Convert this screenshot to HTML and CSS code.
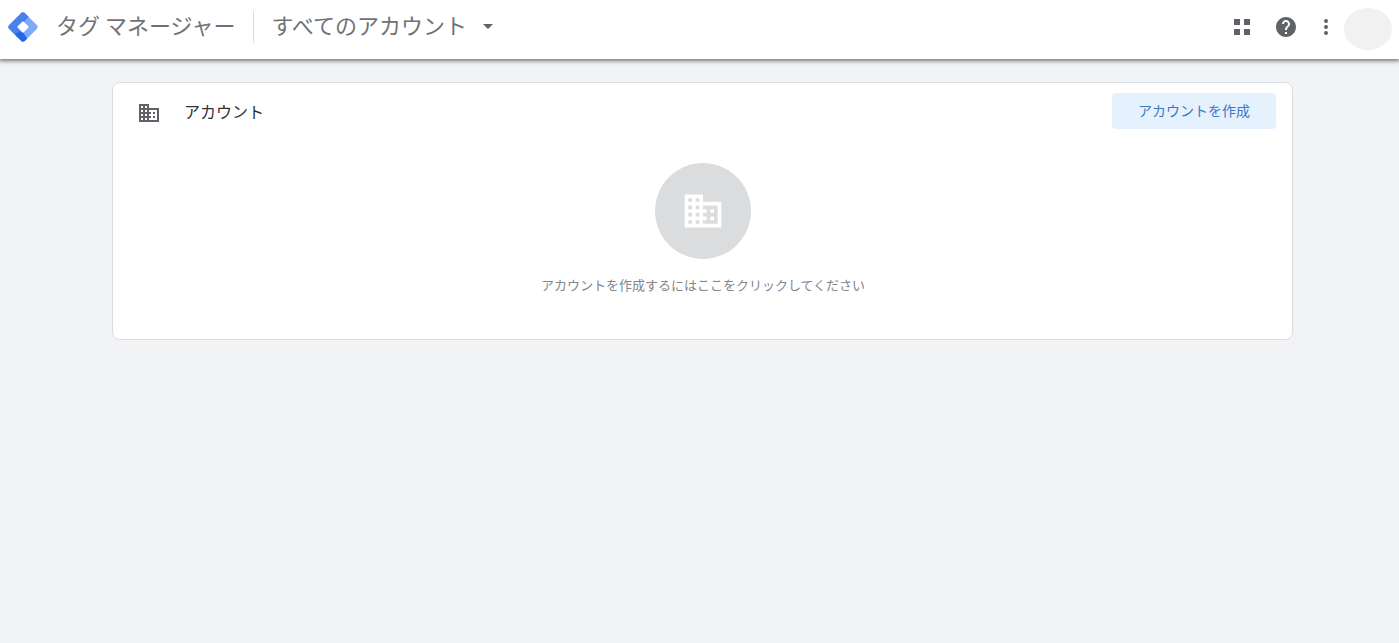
FILE: index.html
```html
<!DOCTYPE html>
<html lang="ja">
<head>
<meta charset="utf-8">
<meta name="viewport" content="width=device-width, initial-scale=1">
<title>タグ マネージャー</title>
<link rel="stylesheet" href="styles.css">
</head>
<body>
<header class="topbar">
  <svg class="logo" viewBox="0 0 30 30" aria-hidden="true">
    <path fill="#80aaf9" d="M13 1.200a3 3 0 0 1 4 0L28.800 13a3 3 0 0 1 0 4L17 28.800a3 3 0 0 1-4 0L1.200 17a3 3 0 0 1 0-4z"/>
    <path fill="#4a80ee" d="M13 1.200a3 3 0 0 1 4 0L20.800 5 10.500 15l5 5-5.500 5.800L1.200 17a3 3 0 0 1 0-4z"/>
    <path fill="#2467e4" d="M11 19.500 15 20.200l4.200 6.400-2.200 2.200a3 3 0 0 1-4 0L7 22.800z"/>
    <path fill="#fff" d="M14.300 9.700a1 1 0 0 1 1.400 0l4.600 4.600a1 1 0 0 1 0 1.400l-4.600 4.600a1 1 0 0 1-1.400 0l-4.600-4.600a1 1 0 0 1 0-1.400z"/>
  </svg>
  <h1 class="product">タグ マネージャー</h1>
  <button class="account-menu" type="button" aria-haspopup="true">
    <span class="account-name">すべてのアカウント</span>
    <svg class="caret" viewBox="0 0 10 5" aria-hidden="true"><path d="M0 0h10L5 5z"/></svg>
  </button>
  <div class="actions">
    <button class="icon-button" type="button" aria-label="アプリ">
      <svg viewBox="0 0 24 24" aria-hidden="true"><path d="M4 4h6v6H4zM14 4h6v6h-6zM4 14h6v6H4zM14 14h6v6h-6z"/></svg>
    </button>
    <button class="icon-button" type="button" aria-label="ヘルプ">
      <svg viewBox="0 0 24 24" aria-hidden="true"><path d="M12 2C6.480 2 2 6.480 2 12s4.480 10 10 10 10-4.480 10-10S17.520 2 12 2zm1 17h-2v-2h2v2zm2.070-7.750-.9.920C13.450 12.900 13 13.500 13 15h-2v-.5c0-1.100.45-2.100 1.170-2.830l1.240-1.260c.37-.36.59-.86.59-1.410 0-1.100-.9-2-2-2s-2 .9-2 2H8c0-2.210 1.790-4 4-4s4 1.790 4 4c0 .88-.36 1.680-.93 2.250z"/></svg>
    </button>
    <button class="icon-button more" type="button" aria-label="その他">
      <svg viewBox="0 0 24 24" aria-hidden="true"><circle cx="12" cy="6" r="2"/><circle cx="12" cy="12" r="2"/><circle cx="12" cy="18" r="2"/></svg>
    </button>
    <button class="avatar" type="button" aria-label="プロフィール"></button>
  </div>
</header>
<main class="page">
  <section class="card">
    <div class="card-header">
      <svg class="card-icon" viewBox="0 0 24 24" aria-hidden="true"><path d="M12 7V3H2v18h20V7H12zM6 19H4v-2h2v2zm0-4H4v-2h2v2zm0-4H4V9h2v2zm0-4H4V5h2v2zm4 12H8v-2h2v2zm0-4H8v-2h2v2zm0-4H8V9h2v2zm0-4H8V5h2v2zm10 12h-8v-2h2v-2h-2v-2h2v-2h-2V9h8v10zm-2-8h-2v2h2v-2zm0 4h-2v2h2v-2z"/></svg>
      <h2 class="card-title">アカウント</h2>
      <button class="create" type="button">アカウントを作成</button>
    </div>
    <button class="empty" type="button">
      <span class="empty-badge">
        <svg viewBox="0 0 24 24" aria-hidden="true"><path d="M12 7V3H2v18h20V7H12zM6 19H4v-2h2v2zm0-4H4v-2h2v2zm0-4H4V9h2v2zm0-4H4V5h2v2zm4 12H8v-2h2v2zm0-4H8v-2h2v2zm0-4H8V9h2v2zm0-4H8V5h2v2zm10 12h-8v-2h2v-2h-2v-2h2v-2h-2V9h8v10zm-2-8h-2v2h2v-2zm0 4h-2v2h2v-2z"/></svg>
      </span>
      <span class="empty-text">アカウントを作成するにはここをクリックしてください</span>
    </button>
  </section>
</main>
</body>
</html>
```
FILE: styles.css
```css
* {
  box-sizing: border-box;
}

body {
  margin: 0;
  min-height: 100vh;
  background: #f1f3f4;
  color: #3c4043;
  font-family: "Noto Sans CJK JP", sans-serif;
}

button {
  border: 0;
  padding: 0;
  background: none;
  color: inherit;
  font: inherit;
  cursor: pointer;
}

svg {
  display: block;
  fill: currentColor;
}

.topbar {
  display: flex;
  align-items: center;
  padding: 0 7px 6px 8px;
  height: 59px;
  background: #fff;
  box-shadow: 0 1px 4px 1px rgba(0, 0, 0, 0.5);
  color: #5f6368;
}

.logo {
  flex: none;
  width: 30px;
  height: 30px;
}

.product,
.account-name {
  padding-bottom: 6px;
  color: #6f7276;
  font-size: 22px;
  font-weight: 400;
  line-height: 26px;
  white-space: nowrap;
}

.product {
  margin: 0 0 0 18px;
}

.account-menu {
  display: flex;
  align-items: center;
  gap: 16px;
  margin-left: 18px;
  padding-left: 17px;
  border-left: 1px solid #dadce0;
}

.caret {
  width: 10px;
  height: 5px;
}

.actions {
  display: flex;
  align-items: center;
  gap: 20px;
  margin-left: auto;
}

.icon-button svg {
  width: 24px;
  height: 24px;
}

.more {
  margin: 0 -14px 0 -4px;
}

.avatar {
  width: 48px;
  height: 42px;
  margin-top: 5px;
  border-radius: 50%;
  background: #f1f1f1;
}

.page {
  padding: 23px 106px 24px 112px;
}

.card {
  padding-bottom: 44px;
  border: 1px solid #dadce0;
  border-radius: 8px;
  background: #fff;
}

.card-header {
  display: flex;
  align-items: center;
  padding: 10px 16px 0 24px;
}

.card-icon {
  width: 24px;
  height: 24px;
  margin-top: 3px;
  color: #5f6368;
}

.card-title {
  margin: 0 auto 0 23px;
  color: #303134;
  font-size: 16px;
  font-weight: 400;
  line-height: 24px;
}

.create {
  height: 36px;
  padding: 0 26px 2px;
  border-radius: 4px;
  background: #e6f1fe;
  color: #3c78c0;
  font-size: 14px;
}

.empty {
  display: flex;
  flex-direction: column;
  align-items: center;
  gap: 16px;
  width: 100%;
  padding-left: 1px;
  margin-top: 34px;
}

.empty-badge {
  display: flex;
  align-items: center;
  justify-content: center;
  width: 96px;
  height: 96px;
  border-radius: 50%;
  background: #dadcde;
  color: #fff;
}

.empty-badge svg {
  width: 44px;
  height: 44px;
}

.empty-text {
  color: #80868b;
  font-size: 13px;
  line-height: 20px;
}
```
